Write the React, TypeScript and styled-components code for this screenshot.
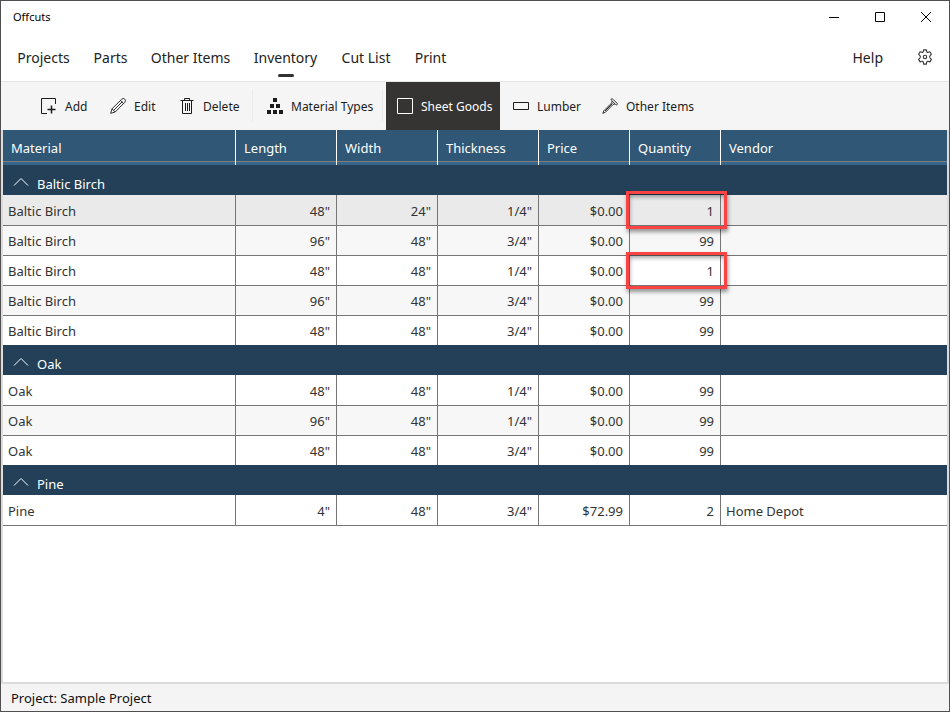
import React, { useState } from "react";
import styled, { createGlobalStyle, css } from "styled-components";

const GlobalStyle = createGlobalStyle`
  *, *::before, *::after { box-sizing: border-box; }
  body {
    margin: 0;
    background: #ffffff;
    color: #222222;
    font-family: "Noto Sans", "Open Sans", sans-serif;
    font-size: 13px;
  }
  button { font: inherit; color: inherit; background: none; border: 0; padding: 0; margin: 0; }
`;

const Window = styled.div`
  display: flex;
  flex-direction: column;
  min-height: 100vh;
  border: 1px solid #504e4f;
  background: #ffffff;
`;

const TitleBar = styled.header`
  display: flex;
  align-items: stretch;
  justify-content: space-between;
  height: 32px;
  padding-left: 12px;
  color: #000000;
`;

const Title = styled.h1`
  margin: 0;
  font-size: 11px;
  font-weight: 400;
  line-height: 32px;
`;

const WindowControls = styled.div`
  display: flex;
`;

const WindowButton = styled.button`
  display: grid;
  place-items: center;
  width: 46px;
`;

const NavBar = styled.nav`
  display: flex;
  align-items: stretch;
  height: 48px;
  padding: 0 10px 0 4px;
`;

const Tab = styled.button<{ $active?: boolean; $width: number }>`
  position: relative;
  flex: 0 0 ${(p) => p.$width}px;
  padding-top: 2px;
  font-size: 14px;
  line-height: 20px;
  white-space: nowrap;
  ${(p) =>
    p.$active &&
    css`
      &::after {
        content: "";
        position: absolute;
        left: calc(50% - 8px);
        bottom: 4px;
        width: 16px;
        height: 3px;
        border-radius: 2px;
        background: #333231;
      }
    `}
`;

const Spacer = styled.div`
  flex: 1;
`;

const HelpLink = styled.a`
  align-self: center;
  color: inherit;
  font-size: 14px;
  text-decoration: none;
  margin-right: 28px;
`;

const IconButton = styled.button`
  display: grid;
  place-items: center;
  width: 28px;
`;

const Toolbar = styled.div`
  display: flex;
  align-items: stretch;
  height: 49px;
  padding-left: 29px;
  border-top: 1px solid #e6e6e6;
  background: #f5f5f5;
`;

const Tool = styled.button<{ $active?: boolean; $width: number }>`
  display: flex;
  align-items: center;
  flex: 0 0 ${(p) => p.$width}px;
  gap: 8px;
  margin-right: ${(p) => (p.$active ? 2 : 0)}px;
  padding-left: 11px;
  font-size: 12px;
  white-space: nowrap;
  color: ${(p) => (p.$active ? "#ffffff" : "#1c1c1c")};
  background: ${(p) => (p.$active ? "#363432" : "transparent")};
`;

const Separator = styled.div`
  width: 1px;
  margin: 8px 3px 8px 2px;
  background: #ebebeb;
`;

const GridArea = styled.main`
  flex: 1;
  border: solid #dcdcdc;
  border-width: 0 2px 2px;
`;

const Table = styled.table`
  width: 100%;
  table-layout: fixed;
  border-collapse: separate;
  border-spacing: 0;
  border-bottom: 1px solid #767676;
`;

const Column = styled.col<{ $width?: number }>`
  width: ${(p) => (p.$width ? `${p.$width}px` : "auto")};
`;

const HeadCell = styled.th`
  height: 35px;
  padding: 0 8px;
  border-right: 1px solid #ffffff;
  background: linear-gradient(#305775 31px, #7c7f84 31px, #7c7f84 32px, #37658a 32px);
  color: #ffffff;
  font-weight: 400;
  line-height: 20px;
  text-align: left;
  &:last-child { border-right: 0; }
`;

const GroupCell = styled.th`
  height: 30px;
  padding: 0;
  background: #234058;
  color: #ffffff;
  font-weight: 400;
  text-align: left;
`;

const GroupToggle = styled.button`
  display: flex;
  align-items: center;
  gap: 8px;
  width: 100%;
  height: 30px;
  padding: 8px 10px 0;
`;

const Chevron = styled.svg<{ $open: boolean }>`
  margin-bottom: 4px;
  transform: ${(p) => (p.$open ? "none" : "rotate(180deg)")};
`;

const Row = styled.tr<{ $tone: Tone; $first: boolean }>`
  background: ${(p) => ({ selected: "#eaeaea", alt: "#f7f7f7", plain: "#ffffff" })[p.$tone]};
  td {
    border-top: ${(p) => (p.$first ? "0" : "1px solid #767676")};
    padding-top: ${(p) => (p.$first ? "2px" : "0")};
  }
`;

const Cell = styled.td<{ $numeric?: boolean }>`
  position: relative;
  height: 30px;
  padding: 0 6px 0 5px;
  border-right: 1px solid #767676;
  color: #333333;
  line-height: 20px;
  text-align: ${(p) => (p.$numeric ? "right" : "left")};
  &:last-child { border-right: 0; }
`;

const Highlight = styled.span`
  position: absolute;
  z-index: 1;
  inset: -4px -7px -4px -4px;
  border: 3px solid #fb4343;
  box-shadow: 1px 3px 4px rgba(0, 0, 0, 0.4), inset 1px 3px 4px rgba(0, 0, 0, 0.35);
  pointer-events: none;
`;

const StatusBar = styled.footer`
  height: 27px;
  padding: 1px 10px 0;
  background: #f4f4f4;
  color: #111111;
  line-height: 27px;
`;

type Tone = "selected" | "alt" | "plain";

interface Item {
  values: string[];
  tone: Tone;
  marked?: boolean;
}

const groups: { name: string; items: Item[] }[] = [
  {
    name: "Baltic Birch",
    items: [
      { values: ["Baltic Birch", '48"', '24"', '1/4"', "$0.00", "1", ""], tone: "selected", marked: true },
      { values: ["Baltic Birch", '96"', '48"', '3/4"', "$0.00", "99", ""], tone: "alt" },
      { values: ["Baltic Birch", '48"', '48"', '1/4"', "$0.00", "1", ""], tone: "plain", marked: true },
      { values: ["Baltic Birch", '96"', '48"', '3/4"', "$0.00", "99", ""], tone: "alt" },
      { values: ["Baltic Birch", '48"', '48"', '3/4"', "$0.00", "99", ""], tone: "plain" },
    ],
  },
  {
    name: "Oak",
    items: [
      { values: ["Oak", '48"', '48"', '1/4"', "$0.00", "99", ""], tone: "plain" },
      { values: ["Oak", '96"', '48"', '1/4"', "$0.00", "99", ""], tone: "alt" },
      { values: ["Oak", '48"', '48"', '3/4"', "$0.00", "99", ""], tone: "plain" },
    ],
  },
  {
    name: "Pine",
    items: [{ values: ["Pine", '4"', '48"', '3/4"', "$72.99", "2", "Home Depot"], tone: "plain" }],
  },
];

const columns: { title: string; width?: number }[] = [
  { title: "Material", width: 233 },
  { title: "Length", width: 101 },
  { title: "Width", width: 101 },
  { title: "Thickness", width: 101 },
  { title: "Price", width: 91 },
  { title: "Quantity", width: 91 },
  { title: "Vendor" },
];

const tabs = [
  { label: "Projects", width: 77 },
  { label: "Parts", width: 57 },
  { label: "Other Items", width: 103 },
  { label: "Inventory", width: 87 },
  { label: "Cut List", width: 74 },
  { label: "Print", width: 55 },
];

const Glyph = ({ children }: { children: React.ReactNode }) => (
  <svg width="16" height="16" viewBox="0 0 16 16" fill="none" stroke="currentColor" aria-hidden="true">
    {children}
  </svg>
);

const AddIcon = () => (
  <Glyph>
    <path d="M6 15.500H.5V.5h14V6" />
    <path d="M10.500 7.500v8M6.500 11.500h8" strokeWidth="1.500" />
  </Glyph>
);

const EditIcon = () => (
  <Glyph>
    <path d="M.7 15.300 2 10.800 11.700 1.200a2.150 2.150 0 0 1 3.100 3.100L5.200 14zM2 10.800 5.200 14M3.600 12.400 12.500 3.500M10.400 2.500l3.100 3.100" strokeWidth=".9" />
  </Glyph>
);

const DeleteIcon = () => (
  <Glyph>
    <path d="M1.500 2.500h13M5.500 2.500v-2h5v2M3.500 2.500v13h9v-13M6.500 5v8M8.500 5v8M10.500 5v8" />
  </Glyph>
);

const MaterialIcon = () => (
  <Glyph>
    <path d="M6 0h4v4H6zM3 6h4v4H3zM9 6h4v4H9zM0 12h4v4H0zM6 12h4v4H6zM12 12h4v4h-4z" fill="currentColor" stroke="none" />
  </Glyph>
);

const SheetIcon = () => (
  <Glyph>
    <path d="M.5.5h15v15H.5z" />
  </Glyph>
);

const LumberIcon = () => (
  <Glyph>
    <path d="M.5 4.500h15v7H.5z" />
  </Glyph>
);

const NailIcon = () => (
  <Glyph>
    <path d="M9.300.9c-.5.500-.2 1.100.3 1.600l3.900 3.900c.5.500 1.100.8 1.600.3s.2-1.100-.3-1.600l-3.900-3.900c-.5-.5-1.100-.8-1.600-.3zM10.200 3.100 9.600 5 1.800 12.800.8 15.300l2.500-1L11.100 6.500l1.900-.6M10.600 5.400 3 13" strokeWidth=".9" />
  </Glyph>
);

const GearIcon = () => (
  <svg width="16" height="16" viewBox="0 0 16 16" fill="none" stroke="#333333" strokeWidth="1.100" strokeLinejoin="round" aria-hidden="true">
    <path d="M6.600.9h2.800l.3 1.500c.1.700.9 1.100 1.500.9l1.700-.6 1.500 2.500-1.300 1.400c-.6.700-.6 1.700 0 2.400l1.300 1.400-1.500 2.500-1.700-.6c-.6-.2-1.400.2-1.500.9l-.3 1.900H6.600l-.3-1.900c-.1-.7-.9-1.100-1.500-.9l-1.700.6-1.500-2.500 1.300-1.400c.6-.7.6-1.700 0-2.400L1.600 5.200l1.500-2.500 1.700.6c.6.200 1.400-.2 1.500-.9z" />
    <circle cx="8" cy="8" r="1.700" />
  </svg>
);

const tools = [
  { label: "Add", width: 69, icon: <AddIcon /> },
  { label: "Edit", width: 69, icon: <EditIcon /> },
  { label: "Delete", width: 82, icon: <DeleteIcon />, separated: true },
  { label: "Material Types", width: 124, icon: <MaterialIcon />, separated: true },
  { label: "Sheet Goods", width: 114, icon: <SheetIcon /> },
  { label: "Lumber", width: 89, icon: <LumberIcon /> },
  { label: "Other Items", width: 110, icon: <NailIcon /> },
];

export default function App() {
  const [tab, setTab] = useState("Inventory");
  const [tool, setTool] = useState("Sheet Goods");
  const [closed, setClosed] = useState<string[]>([]);

  const toggle = (name: string) =>
    setClosed((c) => (c.includes(name) ? c.filter((n) => n !== name) : [...c, name]));

  return (
    <>
      <GlobalStyle />
      <Window>
        <TitleBar>
          <Title>Offcuts</Title>
          <WindowControls>
            <WindowButton aria-label="Minimize">
              <svg width="10" height="10" stroke="#000"><path d="M0 5.500h10" /></svg>
            </WindowButton>
            <WindowButton aria-label="Maximize">
              <svg width="10" height="10" stroke="#000" fill="none"><path d="M.5.5h9v9H.5z" /></svg>
            </WindowButton>
            <WindowButton aria-label="Close">
              <svg width="10" height="10" stroke="#000"><path d="m0 0 10 10M10 0 0 10" /></svg>
            </WindowButton>
          </WindowControls>
        </TitleBar>

        <NavBar>
          {tabs.map((t) => (
            <Tab key={t.label} $width={t.width} $active={t.label === tab} onClick={() => setTab(t.label)}>
              {t.label}
            </Tab>
          ))}
          <Spacer />
          <HelpLink href="#help">Help</HelpLink>
          <IconButton aria-label="Settings"><GearIcon /></IconButton>
        </NavBar>

        <Toolbar role="toolbar">
          {tools.map((t) => (
            <React.Fragment key={t.label}>
              <Tool $width={t.width} $active={t.label === tool} onClick={() => setTool(t.label)}>
                {t.icon}
                {t.label}
              </Tool>
              {t.separated && <Separator />}
            </React.Fragment>
          ))}
        </Toolbar>

        <GridArea>
          <Table>
            <colgroup>
              {columns.map((c) => <Column key={c.title} $width={c.width} />)}
            </colgroup>
            <thead>
              <tr>{columns.map((c) => <HeadCell key={c.title} scope="col">{c.title}</HeadCell>)}</tr>
            </thead>
            {groups.map((g) => {
              const open = !closed.includes(g.name);
              return (
                <tbody key={g.name}>
                  <tr>
                    <GroupCell colSpan={columns.length} scope="rowgroup">
                      <GroupToggle aria-expanded={open} onClick={() => toggle(g.name)}>
                        <Chevron $open={open} width="16" height="10" fill="none" stroke="#ffffff" aria-hidden="true">
                          <path d="m1 8.500 7-7 7 7" />
                        </Chevron>
                        {g.name}
                      </GroupToggle>
                    </GroupCell>
                  </tr>
                  {open &&
                    g.items.map((item, i) => (
                      <Row key={i} $tone={item.tone} $first={i === 0}>
                        {item.values.map((v, c) => (
                          <Cell key={c} $numeric={c > 0 && c < 6}>
                            {v}
                            {c === 5 && item.marked && <Highlight />}
                          </Cell>
                        ))}
                      </Row>
                    ))}
                </tbody>
              );
            })}
          </Table>
        </GridArea>

        <StatusBar>Project: Sample Project</StatusBar>
      </Window>
    </>
  );
}
